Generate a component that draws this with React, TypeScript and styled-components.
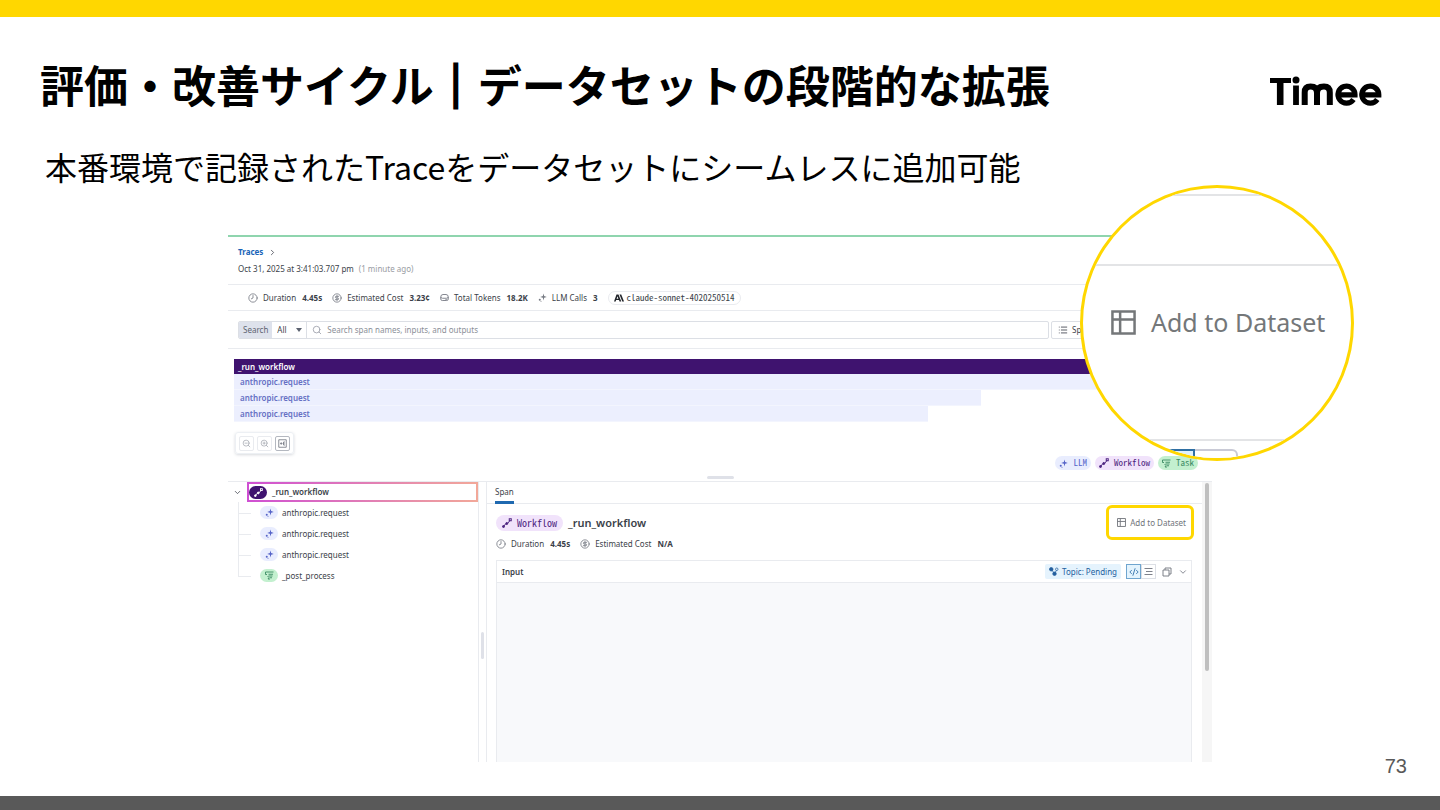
import React from "react";
import styled, { createGlobalStyle, css } from "styled-components";
import {
  ChevronDown,
  ChevronRight,
  CircleDollarSign,
  Clock8,
  CodeXml,
  List,
  Search,
  ZoomIn,
  ZoomOut,
} from "lucide-react";

const yellow = "#ffd700";
const line = "#e9ebef";
const ui = `"Noto Sans", "Open Sans", sans-serif`;
const mono = `"Noto Sans Mono CJK JP", "DejaVu Sans Mono", monospace`;

const GlobalStyle = createGlobalStyle`
  * { box-sizing: border-box; }
  body { margin: 0; background: #fff; }
  h1, h2, h3, p, ul { margin: 0; padding: 0; }
  ul { list-style: none; }
  button, input, select { font: inherit; color: inherit; margin: 0; padding: 0; border: 0; background: none; }
  svg { display: block; flex: none; }
`;

const Slide = styled.div`
  min-height: 100vh;
  display: flex;
  flex-direction: column;
  border-top: 17px solid ${yellow};
`;

const SlideHeader = styled.header`
  display: flex;
  justify-content: space-between;
  align-items: flex-end;
  padding: 35px 58px 0 40px;
  color: #000;
`;

const Title = styled.h1`
  font: 700 44px/64px "Noto Sans CJK JP", sans-serif;
`;

const Divider = styled.span`
  -webkit-text-stroke: 3px #000;
`;

const LogoLink = styled.a`
  padding-bottom: 10px;
`;

const Lead = styled.p`
  padding: 26px 45px 0;
  font: 400 32px/48px "Noto Sans CJK JP", sans-serif;
  color: #000;
`;

const SlideFooter = styled.footer`
  margin-top: auto;
  border-bottom: 14px solid #595959;
  padding: 0 33px 18px;
  text-align: right;
  font: 400 20px/24px "Liberation Sans", Arial, sans-serif;
  color: #595959;
`;

const Figure = styled.section`
  position: relative;
  margin: 45px 228px -20px;
  height: 527px;
  display: flex;
  flex-direction: column;
  border-top: 2px solid #8fd5ae;
  font: 400 8px/12px ${ui};
  color: #3b3f49;
`;

const Crumbs = styled.div`
  display: flex;
  flex-direction: column;
  gap: 5px;
  padding: 9px 10px;
  border-bottom: 1px solid ${line};
`;

const Row = styled.div`
  display: flex;
  align-items: center;
  gap: 5px;
`;

const CrumbLink = styled.a`
  color: #1a64b8;
  font-weight: 700;
  text-decoration: none;
`;

const Muted = styled.span`
  color: #999ca3;
`;

const Metrics = styled.div<{ $top?: boolean }>`
  display: flex;
  align-items: center;
  gap: 10px;
  ${(p) =>
    p.$top
      ? css`
          height: 26px;
          padding-left: 20px;
          border-bottom: 1px solid ${line};
        `
      : css`
          margin-top: -2px;
        `}
`;

const MetricBox = styled.div`
  display: flex;
  align-items: center;
  gap: 5px;
  svg {
    color: #777b84;
  }
  b {
    margin-left: 1px;
  }
`;

const ModelPill = styled.span`
  display: flex;
  align-items: center;
  gap: 3px;
  height: 14px;
  padding: 0 5px;
  border: 1px solid ${line};
  border-radius: 7px;
  font: 400 9px/12px ${mono};
`;

const SearchRow = styled.div`
  display: flex;
  align-items: center;
  gap: 2px;
  height: 38px;
  padding: 0 10px;
  border-bottom: 1px solid ${line};
`;

const SearchBox = styled.div`
  flex: 1;
  display: flex;
  height: 18px;
  border: 1px solid #dcdfe5;
  border-radius: 2px;
  overflow: hidden;
`;

const SearchLabel = styled.label`
  padding: 0 4px;
  line-height: 16px;
  background: #dee2ec;
  color: #5c6270;
`;

const SelectBox = styled.div`
  width: 35px;
  display: flex;
  align-items: center;
  padding-right: 4px;
  border-right: 1px solid #dcdfe5;
`;

const Scope = styled.select`
  flex: 1;
  min-width: 0;
  appearance: none;
  padding-left: 5px;
  outline: 0;
`;

const Query = styled.input`
  flex: 1;
  outline: 0;
  &::placeholder {
    color: #8b8f98;
    opacity: 1;
  }
`;

const QueryField = styled.div`
  flex: 1;
  display: flex;
  align-items: center;
  gap: 5px;
  padding-left: 5px;
  svg {
    color: #9a9ea8;
  }
`;

const SpanFilter = styled.button`
  width: 151px;
  height: 18px;
  display: flex;
  align-items: center;
  gap: 4px;
  padding: 0 6px;
  border: 1px solid #dcdfe5;
  border-radius: 2px;
`;

const Timeline = styled.div`
  padding: 10px 6px 0;
  height: 83px;
  font-weight: 600;
`;

const TimelineBar = styled.div<{ $root?: boolean; $width: number }>`
  width: ${(p) => p.$width}%;
  height: ${(p) => (p.$root ? 15 : 16)}px;
  line-height: 15px;
  padding-left: ${(p) => (p.$root ? 4 : 6)}px;
  background: ${(p) => (p.$root ? "#3f136f" : "#eceffe")};
  color: ${(p) => (p.$root ? "#fff" : "#6670c4")};
  border-bottom: ${(p) => (p.$root ? 0 : 1)}px solid #f3f5fe;
`;

const ZoomTools = styled.div`
  align-self: flex-start;
  display: flex;
  align-items: center;
  gap: 3px;
  height: 22px;
  margin-left: 7px;
  padding: 0 3px;
  border-radius: 3px;
  border: 1px solid #edf0f4;
  box-shadow: 0 1px 3px rgba(60, 70, 90, 0.2);
`;

const ToolButton = styled.button<{ $strong?: boolean }>`
  width: 15px;
  height: 15px;
  display: grid;
  place-items: center;
  border: 1px solid ${(p) => (p.$strong ? "#b4b8c0" : line)};
  border-radius: 2px;
  color: ${(p) => (p.$strong ? "#70747e" : "#a4a8b0")};
`;

const Legend = styled.div`
  display: flex;
  justify-content: flex-end;
  gap: 4px;
  margin-top: 2px;
  padding: 0 14px 6px;
`;

const tones = {
  llm: { bg: "#e9edfe", fg: "#5563c8" },
  workflow: { bg: "#f1e3fb", fg: "#4d2480" },
  task: { bg: "#c3f0cf", fg: "#3b8a63" },
  root: { bg: "#3f136f", fg: "#fff" },
};
type Tone = keyof typeof tones;

const Tag = styled.span<{ $tone: Tone; $large?: boolean }>`
  display: flex;
  align-items: center;
  gap: 5px;
  height: ${(p) => (p.$large ? 16 : 14)}px;
  padding: 0 ${(p) => (p.$large ? 6 : 4)}px;
  border-radius: 8px;
  background: ${(p) => tones[p.$tone].bg};
  color: ${(p) => tones[p.$tone].fg};
  font: 400 ${(p) => (p.$large ? 10 : 9)}px/12px ${mono};
`;

const Badge = styled.span<{ $tone: Tone }>`
  width: 18px;
  height: 13px;
  display: grid;
  place-items: center;
  border-radius: 7px;
  background: ${(p) => tones[p.$tone].bg};
  color: ${(p) => tones[p.$tone].fg};
`;

const SplitHandle = styled.div<{ $vertical?: boolean }>`
  align-self: center;
  width: ${(p) => (p.$vertical ? 3 : 27)}px;
  height: ${(p) => (p.$vertical ? 27 : 3)}px;
  border-radius: 2px;
  background: #dfe1e8;
`;

const Panes = styled.div`
  flex: 1;
  min-height: 0;
  display: flex;
  margin-top: 2px;
  border-top: 1px solid ${line};
`;

const TreePane = styled.nav`
  width: 250px;
  padding-left: 5px;
`;

const RootSpan = styled.button`
  flex: 1;
  height: 20px;
  display: flex;
  align-items: center;
  gap: 5px;
  border: 2px solid transparent;
  background: linear-gradient(#fff, #fff) padding-box,
    linear-gradient(90deg, #cf4fd3, #f2a899) border-box;
  font-weight: 600;
`;

const Children = styled.ul`
  padding-left: 5px;
`;

const Child = styled.li`
  height: 21px;
  display: flex;
  align-items: center;
`;

const Branch = styled.span<{ $last?: boolean }>`
  width: 13px;
  height: 21px;
  margin-right: 9px;
  display: flex;
  flex-direction: column;
  &::before {
    content: "";
    height: 11px;
    border-left: 1px solid ${line};
    border-bottom: 1px solid ${line};
  }
  &::after {
    content: "";
    flex: 1;
    border-left: ${(p) => (p.$last ? 0 : 1)}px solid ${line};
  }
`;

const ChildButton = styled.button`
  display: flex;
  align-items: center;
  gap: 4px;
`;

const Gutter = styled.div`
  width: 9px;
  display: flex;
  justify-content: center;
  padding-top: 47px;
  border: solid ${line};
  border-width: 0 1px;
`;

const DetailPane = styled.div`
  flex: 1;
  min-width: 0;
  display: flex;
  flex-direction: column;
`;

const Tabs = styled.div`
  height: 22px;
  padding-left: 8px;
  border-bottom: 1px solid ${line};
`;

const Tab = styled.button`
  height: 22px;
  border-bottom: 3px solid #1f69b0;
`;

const DetailBody = styled.div`
  flex: 1;
  display: flex;
  flex-direction: column;
  padding: 1px 10px 0 9px;
`;

const DetailTitle = styled.h2`
  font: 600 11px/16px ${ui};
  margin-right: auto;
`;

const DatasetButton = styled.button`
  display: flex;
  align-items: center;
  gap: 4px;
  height: 35px;
  margin-right: -2px;
  padding: 0 5px 0 8px;
  border: 3px solid ${yellow};
  border-radius: 6px;
  color: #70747b;
`;

const Card = styled.div`
  flex: 1;
  display: flex;
  flex-direction: column;
  margin-top: 10px;
  border: 1px solid ${line};
  border-bottom: 0;
`;

const CardHeader = styled.div`
  height: 22px;
  display: flex;
  align-items: center;
  gap: 5px;
  padding: 0 3px 0 5px;
  border-bottom: 1px solid ${line};
`;

const CardTitle = styled.h3`
  font: 600 8px/12px ${ui};
  margin-right: auto;
`;

const Topic = styled.span`
  display: flex;
  align-items: center;
  gap: 3px;
  height: 15px;
  padding: 0 4px;
  border-radius: 2px;
  background: #e5f3fd;
  color: #245f9e;
`;

const ViewSwitch = styled.div`
  display: flex;
`;

const ViewButton = styled.button<{ $on?: boolean }>`
  width: 15px;
  height: 15px;
  display: grid;
  place-items: center;
  border: 1px solid ${(p) => (p.$on ? "#6fa5cf" : "#dcdfe5")};
  background: ${(p) => (p.$on ? "#e3f3fd" : "#fff")};
  color: ${(p) => (p.$on ? "#2467a5" : "#70747e")};
`;

const IconButton = styled.button`
  width: 11px;
  height: 12px;
  display: grid;
  place-items: center;
  color: #70747e;
`;

const CardContent = styled.div`
  flex: 1;
  background: #f8f9fb;
`;

const Scrollbar = styled.div`
  width: 10px;
  padding: 1px 3px 0;
  background: #f6f6f6;
`;

const Thumb = styled.div`
  height: 188px;
  border-radius: 2px;
  background: #bfbfbf;
`;

const Lens = styled.div`
  position: absolute;
  top: -52px;
  right: -142px;
  width: 274px;
  height: 276px;
  overflow: hidden;
  border: 3px solid ${yellow};
  border-radius: 50%;
  background: #fff;
`;

const LensTop = styled.div`
  height: 72px;
  margin-top: 6px;
  border: solid #e3e4e6;
  border-width: 2px 0;
`;

const LensMiddle = styled.div`
  height: 175px;
  padding: 32px 0 0 28px;
  border-bottom: 2px solid #e3e4e6;
`;

const LensButton = styled.button`
  display: flex;
  align-items: center;
  gap: 15px;
  font: 400 25px/48px ${ui};
  color: #747779;
`;

const LensBottom = styled.div`
  display: flex;
  padding: 8px 0 0 50px;
`;

const LensCell = styled.span<{ $on?: boolean }>`
  width: ${(p) => (p.$on ? 62 : 43)}px;
  height: 20px;
  border: 2px solid ${(p) => (p.$on ? "#2f6fa3" : "#c9cad6")};
  border-left-width: ${(p) => (p.$on ? 2 : 0)}px;
  border-top-right-radius: ${(p) => (p.$on ? 0 : 6)}px;
  background: ${(p) => (p.$on ? "#dff1fc" : "#fff")};
`;

const TimeeLogo = () => (
  <svg width="112" height="30" viewBox="0 0 112 30" role="img" aria-label="Timee" fill="none" stroke="#000">
    <path d="M0 4.500H21" strokeWidth="5" />
    <path d="M10.200 4V29" strokeWidth="6.600" />
    <circle cx="26" cy="4" r="3.500" fill="#000" stroke="none" />
    <path d="M26 9.500V29" strokeWidth="5.800" />
    <path
      d="M34.700 29V16.500Q34.700 10.600 40.500 10.600Q47 10.600 47 17V29M47 17Q47 10.600 54 10.600Q59.800 10.600 59.800 16.500V29"
      strokeWidth="6"
    />
    <path d="M67 18.800H85A8.500 8.500 0 1 0 83.500 23.500" strokeWidth="5.200" />
    <path d="M91 18.800H108.800A8.500 8.500 0 1 0 107.300 23.500" strokeWidth="5.200" />
  </svg>
);

const SparkIcon = () => (
  <svg width="9" height="9" viewBox="0 0 18 18" fill="currentColor" aria-hidden="true">
    <path d="M11 1l1.300 5.200L17.500 8l-5.200 1.500L11 15l-1.300-5.500L4.500 8l5.200-1.800z" />
    <circle cx="3.500" cy="13.500" r="2" />
    <circle cx="6" cy="16.300" r="1" />
  </svg>
);

const WorkflowIcon = ({ size = 10 }: { size?: number }) => (
  <svg width={size} height={size} viewBox="0 0 20 20" fill="none" stroke="currentColor" strokeWidth="2" aria-hidden="true">
    <path d="M3 17L8 11H11L16 5" />
    <circle cx="3" cy="17" r="2" fill="currentColor" />
    <circle cx="9.500" cy="11" r="2" fill="currentColor" />
    <rect x="14.500" y="1.500" width="4" height="4" />
  </svg>
);

const TaskIcon = () => (
  <svg width="9" height="9" viewBox="0 0 18 18" fill="none" stroke="currentColor" strokeWidth="1.800" aria-hidden="true">
    <path d="M1 2H17M1 2V7H4M7 6.500H16M7 10H15M10 13.500H14M5 10L8 13L6 16H10" />
  </svg>
);

const TokensIcon = () => (
  <svg width="9" height="9" viewBox="0 0 18 18" fill="none" stroke="currentColor" strokeWidth="1.800" aria-hidden="true">
    <path d="M1.500 8Q1.500 3 6 3H12Q16.500 3 16.500 8V12Q16.500 15 13.500 15H4.500Q1.500 15 1.500 12ZM1.500 8Q2 10.500 5 10.500H13Q16 10.500 16.500 8M11 13H13.500" />
  </svg>
);

const AnthropicLogo = () => (
  <svg width="10" height="8" viewBox="0 0 20 16" fill="#22252b" aria-hidden="true">
    <path fillRule="evenodd" d="M5 1h4l5.500 14h-3.500l-1-3H4.300l-1 3H0zM7 4.500L5.200 9.500h3.600z" />
    <path d="M11 1h3.500L20 15h-3.500z" />
  </svg>
);

const FitIcon = () => (
  <svg width="9" height="9" viewBox="0 0 18 18" fill="none" stroke="currentColor" strokeWidth="1.600" aria-hidden="true">
    <path d="M1.500 1.500H16.500V16.500H1.500ZM4 9H8M6 6.500L8 9L6 11.500M14 6H11V12H14M11 9H13" />
  </svg>
);

const TableIcon = ({ size = 9 }: { size?: number }) => (
  <svg width={size} height={size} viewBox="0 0 26 26" fill="none" stroke="currentColor" strokeWidth="2.600" aria-hidden="true">
    <path d="M1.500 1.500H24.500V24.500H1.500ZM1.500 10H24.500M9.500 1.500V24.500" />
  </svg>
);

const CopyIcon = () => (
  <svg width="10" height="10" viewBox="0 0 20 20" fill="none" stroke="currentColor" strokeWidth="1.800" aria-hidden="true">
    <path d="M2 6H14V18H2ZM6 6V2H18V14H14" />
  </svg>
);

const LinesIcon = () => (
  <svg width="9" height="9" viewBox="0 0 18 18" stroke="currentColor" strokeWidth="1.800" aria-hidden="true">
    <path d="M1 3H17M4 9H17M1 15H17" />
  </svg>
);

const TopicIcon = () => (
  <svg width="10" height="9" viewBox="0 0 20 18" fill="currentColor" stroke="currentColor" strokeWidth="1.500" aria-hidden="true">
    <circle cx="4.500" cy="4.500" r="3.500" />
    <circle cx="11" cy="13.500" r="3.500" />
    <path d="M4 4L11 13L16 5" fill="none" />
    <circle cx="15.500" cy="4.500" r="2.500" fill="#e5f3fd" />
  </svg>
);

const CaretIcon = () => (
  <svg width="6" height="4" viewBox="0 0 6 4" fill="#5c6270" aria-hidden="true">
    <path d="M0 0H6L3 4z" />
  </svg>
);

const Metric = ({ icon, label, value }: { icon: React.ReactNode; label: string; value: string }) => (
  <MetricBox>
    {icon}
    <span>{label}</span>
    <b>{value}</b>
  </MetricBox>
);

const bars = [
  { name: "_run_workflow", width: 100, root: true },
  { name: "anthropic.request", width: 96 },
  { name: "anthropic.request", width: 76.9 },
  { name: "anthropic.request", width: 71.4 },
];

const spans: { name: string; tone: Tone }[] = [
  { name: "anthropic.request", tone: "llm" },
  { name: "anthropic.request", tone: "llm" },
  { name: "anthropic.request", tone: "llm" },
  { name: "_post_process", tone: "task" },
];

export default function App() {
  return (
    <>
      <GlobalStyle />
      <Slide>
        <SlideHeader>
          <Title>
            評価・改善サイクル<Divider>｜</Divider>データセットの段階的な拡張
          </Title>
          <LogoLink href="#timee">
            <TimeeLogo />
          </LogoLink>
        </SlideHeader>
        <Lead>本番環境で記録されたTraceをデータセットにシームレスに追加可能</Lead>

        <Figure>
          <Crumbs>
            <Row>
              <CrumbLink href="#traces">Traces</CrumbLink>
              <ChevronRight size={9} />
            </Row>
            <Row>
              <span>Oct 31, 2025 at 3:41:03.707 pm</span>
              <Muted>(1 minute ago)</Muted>
            </Row>
          </Crumbs>

          <Metrics $top>
            <Metric icon={<Clock8 size={10} />} label="Duration" value="4.45s" />
            <Metric icon={<CircleDollarSign size={10} />} label="Estimated Cost" value="3.23¢" />
            <Metric icon={<TokensIcon />} label="Total Tokens" value="18.2K" />
            <Metric icon={<SparkIcon />} label="LLM Calls" value="3" />
            <ModelPill>
              <AnthropicLogo />
              claude-sonnet-4020250514
            </ModelPill>
          </Metrics>

          <SearchRow>
            <SearchBox>
              <SearchLabel htmlFor="query">Search</SearchLabel>
              <SelectBox>
                <Scope aria-label="Scope">
                  <option>All</option>
                </Scope>
                <CaretIcon />
              </SelectBox>
              <QueryField>
                <Search size={10} />
                <Query id="query" placeholder="Search span names, inputs, and outputs" />
              </QueryField>
            </SearchBox>
            <SpanFilter>
              <List size={10} />
              Span
            </SpanFilter>
          </SearchRow>

          <Timeline>
            {bars.map((bar, i) => (
              <TimelineBar key={i} $root={bar.root} $width={bar.width}>
                {bar.name}
              </TimelineBar>
            ))}
          </Timeline>

          <ZoomTools>
            <ToolButton aria-label="Zoom out">
              <ZoomOut size={9} />
            </ToolButton>
            <ToolButton aria-label="Zoom in">
              <ZoomIn size={9} />
            </ToolButton>
            <ToolButton aria-label="Fit" $strong>
              <FitIcon />
            </ToolButton>
          </ZoomTools>

          <Legend>
            <Tag $tone="llm">
              <SparkIcon />
              LLM
            </Tag>
            <Tag $tone="workflow">
              <WorkflowIcon />
              Workflow
            </Tag>
            <Tag $tone="task">
              <TaskIcon />
              Task
            </Tag>
          </Legend>

          <SplitHandle />

          <Panes>
            <TreePane aria-label="Spans">
              <Row>
                <ChevronDown size={9} />
                <RootSpan>
                  <Badge $tone="root">
                    <WorkflowIcon size={9} />
                  </Badge>
                  _run_workflow
                </RootSpan>
              </Row>
              <Children>
                {spans.map((span, i) => (
                  <Child key={i}>
                    <Branch $last={i === spans.length - 1} />
                    <ChildButton>
                      <Badge $tone={span.tone}>{span.tone === "llm" ? <SparkIcon /> : <TaskIcon />}</Badge>
                      {span.name}
                    </ChildButton>
                  </Child>
                ))}
              </Children>
            </TreePane>

            <Gutter>
              <SplitHandle $vertical />
            </Gutter>

            <DetailPane>
              <Tabs>
                <Tab>Span</Tab>
              </Tabs>
              <DetailBody>
                <Row>
                  <Tag $tone="workflow" $large>
                    <WorkflowIcon />
                    Workflow
                  </Tag>
                  <DetailTitle>_run_workflow</DetailTitle>
                  <DatasetButton>
                    <TableIcon />
                    Add to Dataset
                  </DatasetButton>
                </Row>
                <Metrics>
                  <Metric icon={<Clock8 size={10} />} label="Duration" value="4.45s" />
                  <Metric icon={<CircleDollarSign size={10} />} label="Estimated Cost" value="N/A" />
                </Metrics>
                <Card>
                  <CardHeader>
                    <CardTitle>Input</CardTitle>
                    <Topic>
                      <TopicIcon />
                      Topic: Pending
                    </Topic>
                    <ViewSwitch>
                      <ViewButton aria-label="Code" $on>
                        <CodeXml size={10} />
                      </ViewButton>
                      <ViewButton aria-label="Text">
                        <LinesIcon />
                      </ViewButton>
                    </ViewSwitch>
                    <IconButton aria-label="Copy">
                      <CopyIcon />
                    </IconButton>
                    <IconButton aria-label="Collapse">
                      <ChevronDown size={10} />
                    </IconButton>
                  </CardHeader>
                  <CardContent />
                </Card>
              </DetailBody>
            </DetailPane>
            <Scrollbar>
              <Thumb />
            </Scrollbar>
          </Panes>

          <Lens>
            <LensTop />
            <LensMiddle>
              <LensButton>
                <TableIcon size={25} />
                Add to Dataset
              </LensButton>
            </LensMiddle>
            <LensBottom>
              <LensCell $on />
              <LensCell />
            </LensBottom>
          </Lens>
        </Figure>

        <SlideFooter>73</SlideFooter>
      </Slide>
    </>
  );
}
